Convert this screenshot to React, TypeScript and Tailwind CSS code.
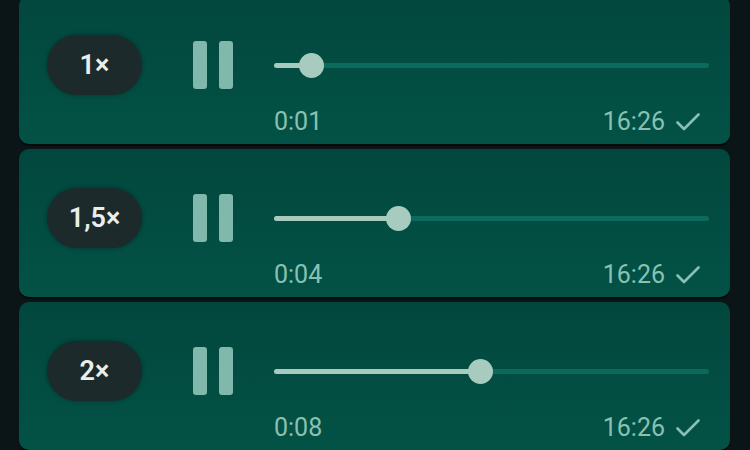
const notes = [
  { speed: "1×", fill: 37, time: "0:01" },
  { speed: "1,5×", fill: 124, time: "0:04" },
  { speed: "2×", fill: 206, time: "0:08" },
];

const VoiceNote = ({ speed, fill, time }: { speed: string; fill: number; time: string }) => {
  return (
    <div className="h-[148px] rounded-[10px] bg-gradient-to-b from-[#02473d] to-[#035246] shadow-[0_2px_1px_rgba(0,0,0,0.55)] pl-[28px] pr-[21px] pt-[39px]">
      <div className="flex items-center h-[60px]">
        <div className="w-[95px] h-[60px] rounded-full bg-[#1d2a2c] flex items-center justify-center text-[27px] font-semibold text-[#e8efee] shadow-[0_0_4px_rgba(0,0,0,0.35)]">
          {speed}
        </div>
        <div className="flex gap-[12px] ml-[51px]">
          <div className="w-[14px] h-[48px] rounded-[3px] bg-[#80b8ab]" />
          <div className="w-[14px] h-[48px] rounded-[3px] bg-[#80b8ab]" />
        </div>
        <div className="relative flex-1 ml-[41px] h-[5px] rounded-full bg-[#0a6a5b]">
          <div className="h-[5px] rounded-full bg-[#a7cbbf]" style={{ width: fill }} />
          <div
            className="absolute top-[-10px] w-[25px] h-[25px] rounded-full bg-[#a7cbbf]"
            style={{ left: fill - 12 }}
          />
        </div>
      </div>
      <div className="flex items-center justify-between ml-[227px] mr-[9px] mt-[14px] text-[25px] leading-[25px] text-[#88c1b3]">
        <span>{time}</span>
        <div className="flex items-center gap-[11px]">
          <span>16:26</span>
          <svg width="24" height="18" viewBox="0 0 24 18" fill="none">
            <polyline points="1.5,9.5 8,16 22.5,1.5" stroke="#88c1b3" strokeWidth="2.6" strokeLinecap="round" strokeLinejoin="round" />
          </svg>
        </div>
      </div>
    </div>
  );
};

const App = () => {
  return (
    <div className="w-[750px] h-[450px] overflow-hidden bg-[#0b1517]" style={{ fontFamily: "Roboto, 'Noto Sans', sans-serif" }}>
      <div className="flex flex-col gap-[5px] -mt-[4px] ml-[19px] mr-[20px]">
        {notes.map((n) => (
          <VoiceNote key={n.speed} speed={n.speed} fill={n.fill} time={n.time} />
        ))}
      </div>
    </div>
  );
};

export default App;
